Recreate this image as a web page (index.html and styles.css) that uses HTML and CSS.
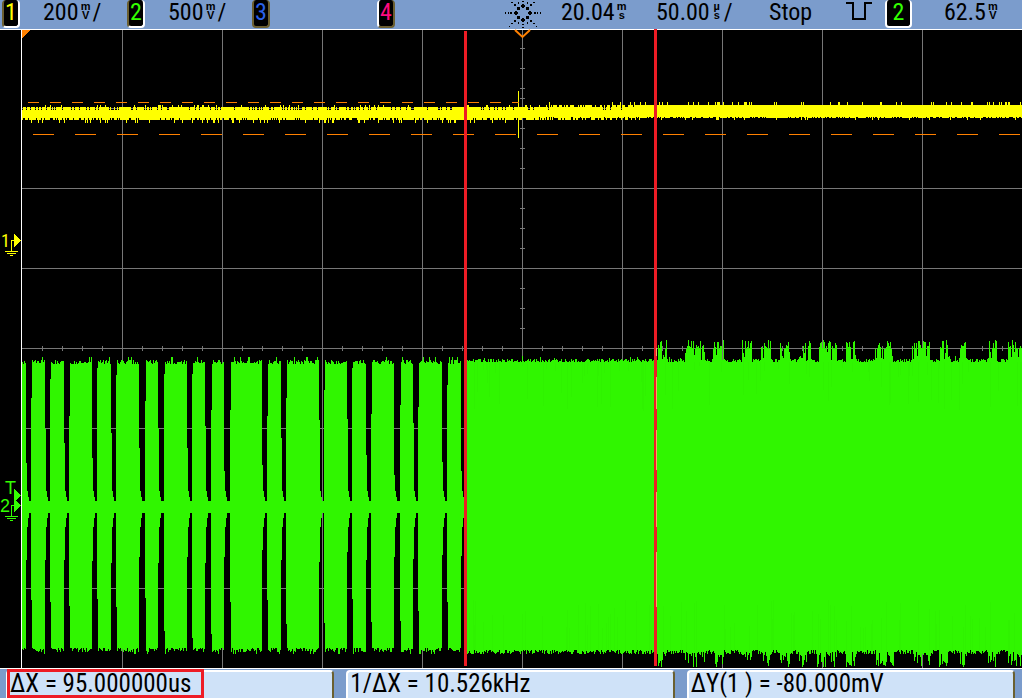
FILE: index.html
```html
<!DOCTYPE html>
<html lang="en">
<head>
<meta charset="utf-8">
<title>Oscilloscope</title>
<link rel="stylesheet" href="styles.css">
</head>
<body>
<header class="status">
  <div class="cell"><span class="badge ch1 on">1</span><span class="value">200<span class="unit"><span>m</span><span>V</span></span>/</span></div>
  <div class="cell"><span class="badge ch2 on">2</span><span class="value">500<span class="unit"><span>m</span><span>V</span></span>/</span></div>
  <div class="cell"><span class="badge ch3">3</span></div>
  <div class="cell"><span class="badge ch4">4</span></div>
  <div class="cell">
    <svg class="burst" viewBox="-18 -13 36 28" aria-hidden="true">
      <path d="M-1-9h2v1h1v2h-1v1h-2v-1h-1v-2h1zM-1 5h2v1h1v2h-1v1h-2v-1h-1v-2h1zM-8-2h2v1h1v2h-1v1h-2v-1h-1v-2h1zM6-2h2v1h1v2h-1v1h-2v-1h-1v-2h1zM-6-6h3v3h-3zM3-6h3v3H3zM-6 3h3v3h-3zM3 3h3v3H3z"/>
      <path d="M-13-1h2v2h-2zM-15-1h1v2h-1zM-18-1h1v2h-1zM11-1h2v2h-2zM14-1h1v2h-1zM17-1h1v2h-1zM-1-12h2v1h-2zM-1 11h2v1h-2zM-1 14h2v1h-2zM-9-9h2v2h-2zM7-9h2v2H7zM-9 7h2v2h-2zM7 7h2v2H7zM-12-11h2v1h-2zM10-11h2v1h-2zM-12 10h2v1h-2zM10 10h2v1h-2zM-14 13h1v1h-1zM13 13h1v1h-1zM-5-11h1v2h-1zM4-11h1v2H4zM-5 9h1v2h-1zM4 9h1v2H4z"/>
    </svg>
  </div>
  <div class="cell"><span>20.04<span class="unit"><span>m</span><span>s</span></span></span></div>
  <div class="cell"><span>50.00<span class="unit"><span>µ</span><span>s</span></span>/</span></div>
  <div class="cell"><span>Stop</span></div>
  <div class="cell"><svg class="pulse" viewBox="0 0 26 18" aria-hidden="true"><path d="M0 1h7v16h12V1h7"/></svg></div>
  <div class="cell"><span class="badge ch2 trigger">2</span></div>
  <div class="cell"><span>62.5<span class="unit"><span>m</span><span>V</span></span></span></div>
</header>

<main class="plot">
  <svg class="screen" viewBox="0 29 1022 640" preserveAspectRatio="none" role="img" aria-label="Waveforms of channels 1 and 2">
    <path id="grid" class="grid"/>
    <path id="ch2" class="trace2"/>
    <path id="ch2shade" class="shade2"/>
    <path id="ch1" class="trace1"/>
    <path class="trace1" d="M518 91h1v47h-1z"/>
    <path class="limit short" d="M28 102.5H519"/>
    <path class="limit long" d="M33 134.5H1022"/>
    <path class="frame" d="M21 30h1v638h-1zM0 29h1022v1H0zM0 668h1022v1H0z"/>
    <path class="orange" d="M22 30h8l-8 8z"/>
    <path class="pointer" d="M515 30l7.500 7 7.500-7"/>
    <path class="cursor" d="M464 31h3v635h-3zM654 29h3v637h-3z"/>
    <path class="glint" d="M656 348h1v8h-1zM656 377h1v32h-1zM656 430h1v40h-1zM656 492h1v35h-1zM656 552h1v55h-1z"/>
    <g class="mark1">
      <text x="1" y="247">1</text>
      <path class="fill" d="M14 234l7 6.500-7 6.500z"/>
      <path class="ground" d="M14 240.500h-2.500v11M5 251.500h13M7 253.500h9M10 255.500h3"/>
    </g>
    <g class="mark2">
      <text x="5" y="494">T</text>
      <text x="0" y="512">2</text>
      <path class="fill" d="M14 489l7 6.500-7 6.500zM14 499l7 6.500-7 6.500z"/>
      <path class="ground" d="M14 505.500h-2.500v11M5 516.500h13M7 518.500h9M10 520.500h3"/>
    </g>
  </svg>
</main>

<footer class="readouts">
  <div class="panel"><span class="reading marked">ΔX = 95.000000us</span></div>
  <div class="panel"><span class="reading">1/ΔX = 10.526kHz</span></div>
  <div class="panel"><span class="reading">ΔY(1 ) = -80.000mV</span></div>
</footer>
<script src="scope.js"></script>
</body>
</html>
```
FILE: styles.css
```css
* { box-sizing: border-box; }

body {
  margin: 0;
  height: 100vh;
  display: flex;
  flex-direction: column;
  background: #000;
  color: #000;
  font-family: "Liberation Sans Narrow", "Arial Narrow", "Roboto Condensed", "Liberation Sans", sans-serif;
  font-size: 24px;
  line-height: 24px;
}

.status {
  flex: none;
  display: grid;
  grid-template-columns: 125fr 125fr 125fr 128fr 56fr 95fr 113fr 77fr 39fr 59fr 78fr;
  height: 29px;
  padding-left: 2px;
  background: #7b9ccc;
  white-space: nowrap;
}

.cell {
  display: flex;
  align-items: flex-start;
  min-width: 0;
}

.badge {
  width: 18px;
  height: 28px;
  margin-right: 23px;
  border: 2px solid #6b5f30;
  border-top: 0;
  border-radius: 4px;
  background: #000;
  text-align: center;
}

.badge.on {
  border-right-color: #fff;
  border-bottom-color: #fff;
}

.ch1 { color: #ff0; }
.ch2 { color: #3f0; }
.ch3 { color: #2a62e8; }
.ch4 { color: #ff0a80; border-left-color: #fff; }

.trigger {
  width: 27px;
  border-color: #fff;
}

.unit {
  display: inline-flex;
  flex-direction: column;
  align-items: center;
  width: 14px;
  margin-top: 2px;
  vertical-align: top;
  font-family: "Liberation Sans", sans-serif;
  font-size: 11px;
  font-weight: bold;
  line-height: 9px;
}

.burst {
  width: 36px;
  height: 28px;
  shape-rendering: crispEdges;
}

.pulse {
  width: 26px;
  height: 18px;
  margin-top: 2px;
  fill: none;
  stroke: #000;
  stroke-width: 2;
}

.plot {
  flex: 1;
  min-height: 0;
}

.screen {
  display: block;
  width: 100%;
  height: 100%;
  shape-rendering: crispEdges;
}

.grid { fill: #777; }
.frame { fill: #fff; }
.trace1 { fill: #ff0; }
.trace2 { fill: #30f600; }
.shade2 { fill: #2ff200; }
.cursor { fill: #ee1c25; }
.glint { fill: #f2b060; }
.orange { fill: #ff8000; }
.limit { stroke: #ff8000; fill: none; }
.short { stroke-dasharray: 11 11; }
.long { stroke-dasharray: 21 21; }
.pointer {
  stroke: #ff8000;
  stroke-width: 2;
  fill: none;
  shape-rendering: auto;
}

.mark1 { fill: #ff0; stroke: #ff0; }
.mark2 { fill: #3f0; stroke: #3f0; }
.mark1 text, .mark2 text { font-size: 18px; stroke-width: 0; }
.mark2 text { font-family: "Liberation Sans", sans-serif; }
.fill { stroke: none; }
.ground { fill: none; }

.readouts {
  flex: none;
  display: grid;
  grid-template-columns: repeat(3, 1fr);
  gap: 12px;
  height: 29px;
  padding: 1px 7px 0 6px;
  background: #7b9ccc;
  font-size: 25px;
  white-space: nowrap;
}

.panel {
  display: flex;
  border: 2px solid #fff;
  border-right-color: #6b6030;
  border-bottom: 0;
  border-radius: 4px 4px 0 0;
  background: #cfe2f8;
}

.reading { padding-left: 2px; }

.marked {
  height: 29px;
  margin: -3px 0 0 -1px;
  padding: 0 10px 0 0;
  border: 3px solid #ee1c25;
}
```
FILE: scope.js
```js
// Repeatable pseudo-random numbers, so every load draws the same noise.
let seed = 7;
function rnd() {
  seed = (seed * 16807) % 2147483647;
  return seed / 2147483647;
}
const column = (x, top, bottom, w = 1) => `M${x} ${top}h${w}V${bottom}h${-w}z`;
const put = (id, d) => document.getElementById(id).setAttribute("d", d);

// Graticule: ten-by-eight divisions, with ticks on the centre axes.
let grid = "";
for (let x = 122; x < 1022; x += 100) grid += column(x, 30, 668);
for (let y = 108; y < 668; y += 80) grid += `M22 ${y}H1022v1H22z`;
for (let x = 42; x < 1022; x += 20) grid += column(x, 346, 351);
for (let y = 48; y < 668; y += 20) grid += `M520 ${y}h5v1h-5z`;
grid += "M520 98h5v1h-5z";
put("grid", grid);

// Channel 1: a noisy steady level that steps up slightly after the trigger.
let ch1 = "";
for (let x = 22; x < 1022; x++) {
  const rise = x < 519 ? 0 : Math.min(1, (x - 519) / 140);
  const lift = rnd() < rise ? 2 : 0;
  let top = rnd() < 0.78 ? 107 : 110;
  let bottom = rnd() < 0.75 ? 120 : 118;
  if (rnd() < 0.08) top = 105;
  if (x < 519 && rnd() < 0.11) bottom = 123;
  if (lift) {
    top = rnd() < 0.14 ? 102 : 105;
    bottom = rnd() < 0.72 ? 118 : 117;
    if (rnd() < 0.07) bottom = 120;
  }
  ch1 += column(x, top, bottom);
}
put("ch1", ch1);

// Channel 2: coded pulses, then a continuous carrier.
const pulses = [[22, 26], [31, 45], [50, 64], [69, 92], [97, 111], [116, 139],
  [145, 158], [164, 187], [192, 205], [211, 224], [230, 262], [267, 281],
  [286, 319], [324, 347], [352, 366], [371, 394], [400, 413], [418, 442],
  [447, 461]];
let ch2 = "";
let shade = "";
for (const [start, end] of pulses) {
  for (let x = start; x < end; x++) {
    let top = 360 + Math.floor(rnd() * 5);
    let bottom = 648 + Math.floor(rnd() * 5);
    if (rnd() < 0.08) top = 357;
    if (rnd() < 0.08) bottom = 654;
    if (x === start && start > 22) {
      top = 368 + Math.floor(rnd() * 50);
      bottom = 642 - Math.floor(rnd() * 45);
    }
    ch2 += column(x, top, bottom);
  }
  ch2 += column(end, 417 + Math.floor(rnd() * 60), 550 + Math.floor(rnd() * 14));
  ch2 += column(end + 1, 491, 527) + column(end + 2, 497, 518);
  ch2 += column(end + 3, 501, 513, 3);
}
const topBursts = [[656, 667], [685, 705], [713, 724], [742, 752], [761, 771],
  [780, 790], [800, 806], [808, 811], [819, 837], [846, 856], [874, 892], [912, 930],
  [940, 950], [959, 967], [988, 997], [1008, 1022]];
const quietBottoms = [[667, 685], [705, 714], [724, 742], [752, 761], [771, 780],
  [790, 798], [807, 817], [837, 846], [856, 876], [894, 914], [931, 939], [949, 960],
  [968, 988], [997, 1008]];
const inside = (list, x) => list.some(([a, b]) => x >= a && x < b);
for (let x = 465; x < 1022; x++) {
  let top = 359 + Math.floor(rnd() * 4);
  let bottom = 650 + Math.floor(rnd() * 5);
  if (rnd() < 0.08) top -= 3;
  if (x > 655) {
    if (inside(topBursts, x)) {
      const r = rnd();
      top = r < 0.3 ? 340 + Math.floor(rnd() * 4) : r < 0.75 ? 345 + Math.floor(rnd() * 5) : 352 + Math.floor(rnd() * 9);
    }
    if (!inside(quietBottoms, x)) {
      bottom = rnd() < 0.5 ? 660 + Math.floor(rnd() * 8) : 652 + Math.floor(rnd() * 6);
    }
  }
  ch2 += column(x, top, bottom);
  if (rnd() < 0.13) shade += column(x, Math.max(top, 362), 362 + Math.floor(rnd() * 50));
  if (rnd() < 0.13) shade += column(x, 600 + Math.floor(rnd() * 30), Math.min(bottom, 650));
}
put("ch2", ch2);
put("ch2shade", shade);
```
